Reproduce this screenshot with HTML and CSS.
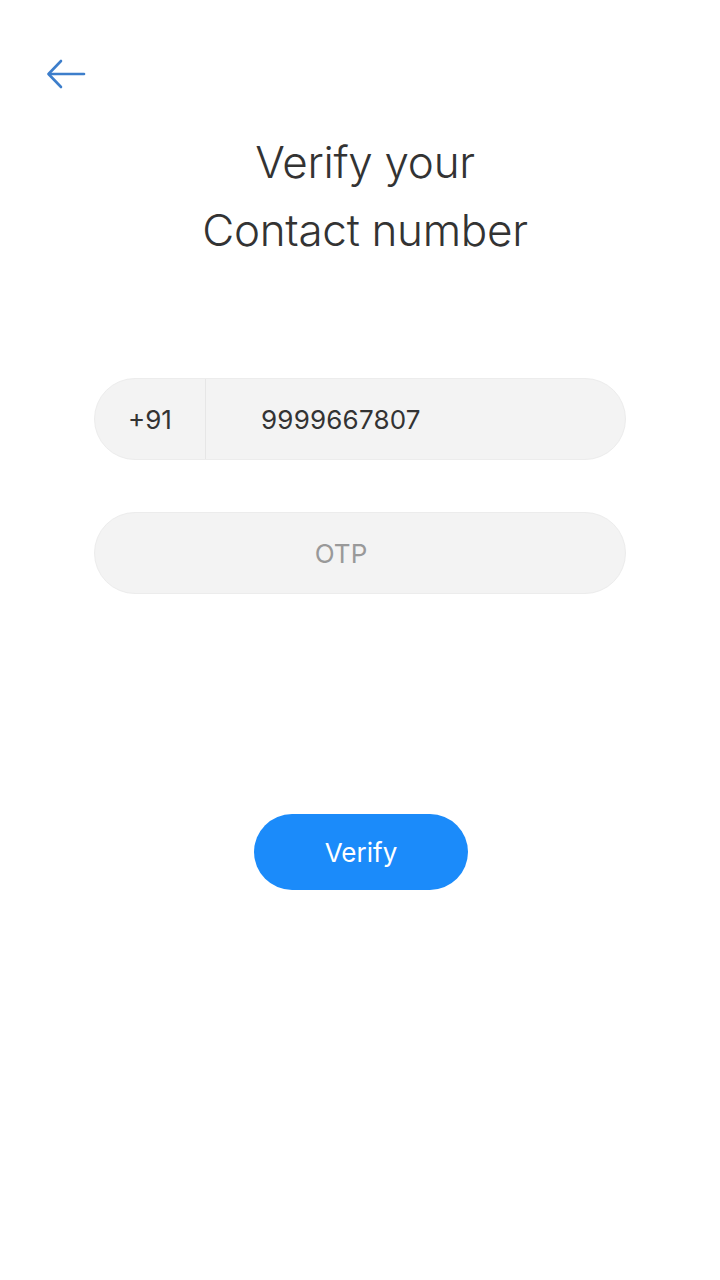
FILE: index.html
```html
<!DOCTYPE html>
<html lang="en">
<head>
<meta charset="utf-8">
<title>Verify your Contact number</title>
<link rel="stylesheet" href="styles.css">
</head>
<body>
<main class="screen">
  <header class="topbar">
    <button class="back" aria-label="Back">
      <svg width="40" height="32" viewBox="0 0 40 32" fill="none" stroke="#3d7ecb" stroke-width="2.6" stroke-linecap="round" stroke-linejoin="round">
        <path d="M3 16 H38"/>
        <path d="M15 3 L2.5 16 L15 29"/>
      </svg>
    </button>
  </header>
  <h1 class="title">Verify your<br>Contact number</h1>
  <form class="form">
    <div class="field phone">
      <span class="code">+91</span>
      <span class="number">9999667807</span>
    </div>
    <div class="field otp">
      <span class="placeholder">OTP</span>
    </div>
  </form>
  <div class="actions">
    <button class="verify" type="button">Verify</button>
  </div>
</main>
</body>
</html>
```
FILE: styles.css
```css
* { box-sizing: border-box; }
html, body { margin: 0; padding: 0; background: #fff; }
body {
  font-family: Inter, "Noto Sans", "Liberation Sans", sans-serif;
  color: #333;
}
.screen {
  width: 720px;
  min-height: 1280px;
  display: flex;
  flex-direction: column;
}
.topbar {
  padding: 58px 0 0 46px;
  height: 90px;
}
.back {
  border: 0;
  background: none;
  padding: 0;
  display: block;
  width: 40px;
  height: 32px;
  cursor: pointer;
}
.back svg { display: block; }
.title {
  margin: 38px 0 0;
  text-align: center;
  font-weight: 300;
  font-size: 44px;
  line-height: 68px;
  color: #333;
  padding-left: 10px;
  letter-spacing: -0.3px;
}
.form {
  margin: 114px 0 0;
  display: flex;
  flex-direction: column;
  align-items: center;
  gap: 52px;
  padding-left: 0;
}
.field {
  width: 532px;
  height: 82px;
  border-radius: 41px;
  background: #f3f3f3;
  border: 1px solid #ececec;
  display: flex;
  align-items: center;
  font-size: 26px;
}
.phone .code {
  width: 111px;
  height: 100%;
  display: flex;
  align-items: center;
  justify-content: center;
  border-right: 1px solid #e6e6e6;
  color: #333;
}
.phone .number {
  padding-left: 55px;
  color: #333;
  letter-spacing: 0.2px;
}
.otp {
  justify-content: center;
  padding-right: 38px;
}
.otp .placeholder { color: #999; }
.actions {
  margin-top: 220px;
  display: flex;
  justify-content: center;
  padding-left: 2px;
}
.verify {
  width: 214px;
  height: 76px;
  border-radius: 38px;
  border: 0;
  background: #1b8bfa;
  color: #fff;
  font-family: inherit;
  font-size: 26px;
  font-weight: 400;
  cursor: pointer;
}
```
